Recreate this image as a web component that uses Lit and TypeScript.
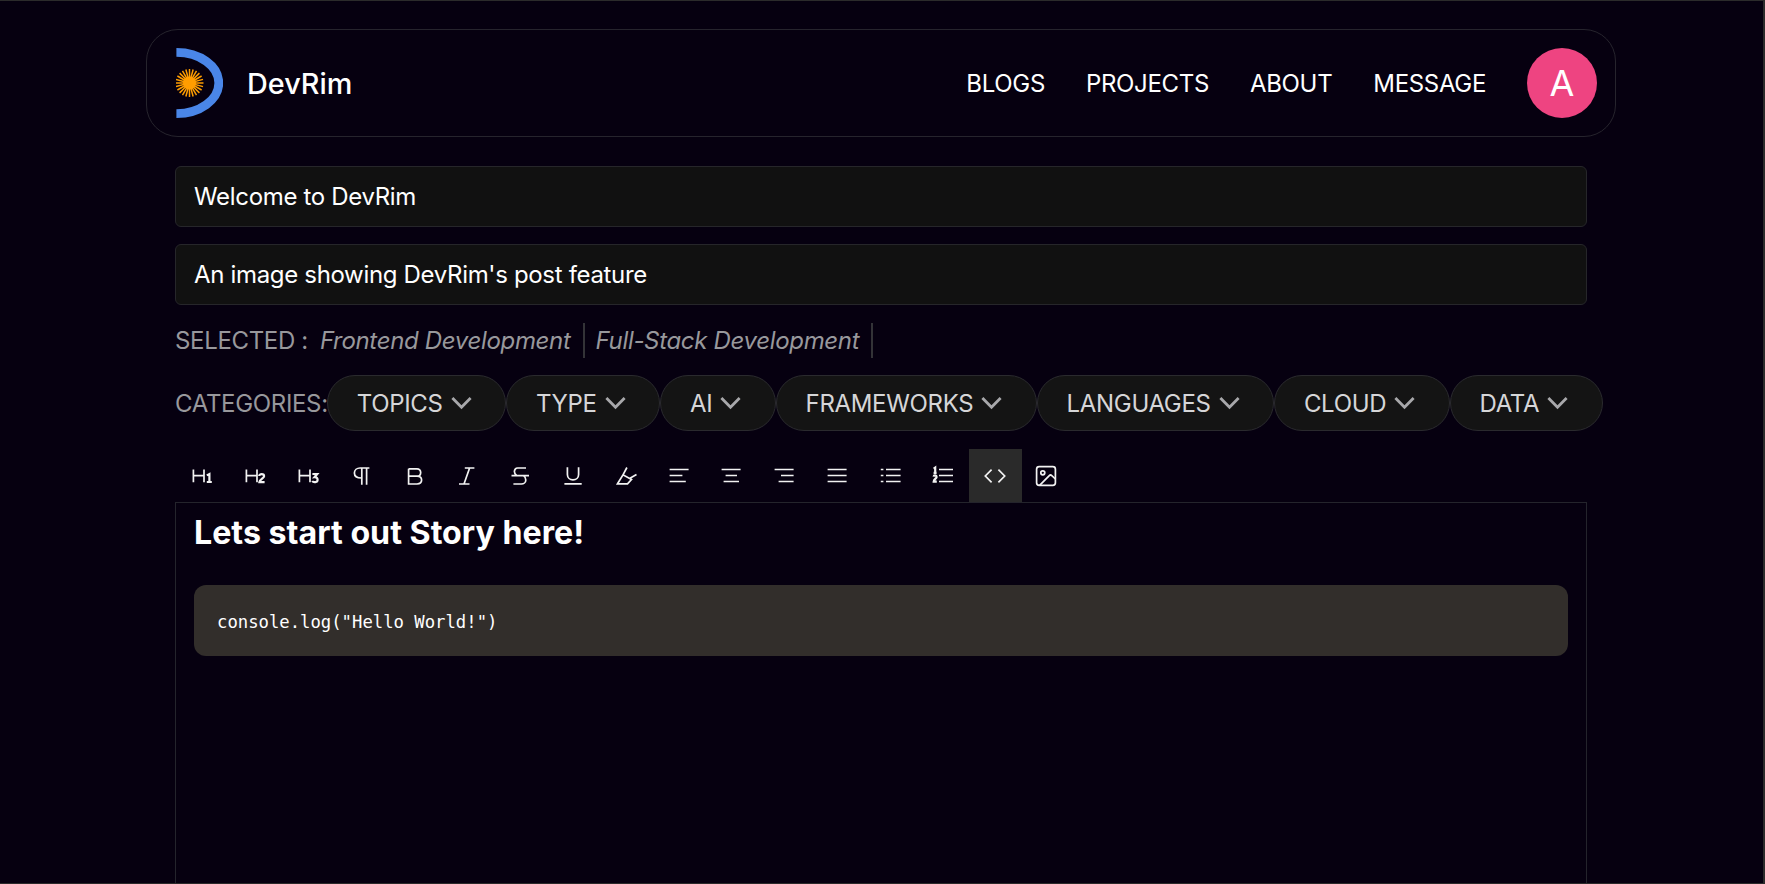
import { LitElement, css, html, svg } from 'lit'
import { customElement } from 'lit/decorators.js'

// toolbar icons, drawn as strokes on a 24 box
const STROKES: Record<string, string> = {
  h1: 'M2.4 5.5V18.2M13 5.5V18.2M2.4 11.6H13',
  h2: 'M2.4 5.5V18.2M13 5.5V18.2M2.4 11.6H13',
  h3: 'M2.4 5.5V18.2M13 5.5V18.2M2.4 11.6H13',
  para: 'M19.4 4H10C7 4 4.4 6 4.4 9C4.4 12 7 14 11.5 14M11.8 4V20.8M16.6 4V20.8',
  bold: 'M5.6 4.8V20H14C16.8 20 18.6 18.3 18.6 16.1C18.6 14 16.9 12.2 14 12.2H5.6M14 12.2C16.4 12.2 17.7 10.5 17.7 8.5C17.7 6.4 16.3 4.8 14 4.8H5.6',
  italic: 'M9.8 4H19.4M4 20H14.5M14.6 4L9 20',
  strike: 'M18 4H9.6C7.6 4 6.4 5.8 6.4 7.6C6.4 9.3 7.2 10.5 8.6 11.5M3.5 11.6H21M15.4 11.6C17.1 12.7 17.8 14.3 17.8 15.9C17.8 18.4 15.6 20 13.4 20H5.4',
  under: 'M6.4 3.2V10.4C6.4 14 9 15.8 12 15.8C15 15.8 17.6 14 17.6 10.4V3.2M3.4 19.9H20.7',
  mark: 'M3.5 19.8L9 10.8L17.5 15.5L13.5 19.8ZM9 10.8L12.9 3.5M15.5 14.4L22.5 10.5',
  left: 'M2.6 5.5H21.6M2.6 11.5H15.4M2.6 17.5H18.8',
  center: 'M2.6 5.5H21.6M6.6 11.5H18M4.6 17.5H20',
  right: 'M2.6 5.5H21.6M9 11.5H21.6M6.6 17.5H21.6',
  justify: 'M2.6 5.5H21.6M2.6 11.5H21.6M2.6 17.5H21.6',
  ul: 'M8 5.5H22.6M8 11.5H22.6M8 17.5H22.6M2.8 5.5H5.4M2.8 11.5H5.4M2.8 17.5H5.4',
  ol: 'M8 5.5H22M8 11.5H22M8 17.5H22',
  code: 'M8.6 5.7L2.3 12L8.6 18.3M15.4 5.7L21.7 12L15.4 18.3',
}

// the small numerals sit heavier than the rest of each icon
const DIGITS: Record<string, string> = {
  h1: 'M15.8 11.4L18.4 10V18.2M15.8 18H20.8',
  h2: 'M15.2 12C15.2 9.4 20.1 9.4 20.1 12.2C20.1 14.2 15.8 15.2 15.4 18.1H20.6',
  h3: 'M15.4 10H20.2L17.5 13.2C19.6 13 20.6 14.3 20.6 15.7C20.6 18.6 16.4 18.8 15.2 17',
  ol: 'M2.6 4.6L4.2 3.6V8.8M2.6 8.8H5.6M2.6 12.6C2.8 11 5.6 11 5.6 12.9C5.6 14.4 2.9 15 2.7 17.6H5.8',
}

const TOOLS = ['h1', 'h2', 'h3', 'para', 'bold', 'italic', 'strike', 'under', 'mark', 'left', 'center', 'right', 'justify', 'ul', 'ol', 'code']
const CATEGORIES = ['TOPICS', 'TYPE', 'AI', 'FRAMEWORKS', 'LANGUAGES', 'CLOUD', 'DATA']
const LINKS = ['BLOGS', 'PROJECTS', 'ABOUT', 'MESSAGE']
const SELECTED = ['Frontend Development', 'Full-Stack Development']

// 24 thin rays around the sun's centre
const RAYS = Array.from({ length: 24 }, (_, i) => {
  const a = (i * Math.PI) / 12
  return svg`<line x1="13.5" y1="35" x2=${13.5 + Math.cos(a) * 14} y2=${35 + Math.sin(a) * 14}></line>`
})

@customElement('app-root')
export class AppRoot extends LitElement {
  static styles = css`
    :host {
      display: block;
      height: 884px;
      overflow: hidden;
      background: #060010;
      color: #fff;
      font-family: Inter, 'Liberation Sans', sans-serif;
      box-sizing: border-box;
      padding-right: 1px;
      border-top: 1px solid #2b2b2b;
      border-right: 2px solid #2b2b2b;
      border-bottom: 1px solid #2b2b2b;
    }
    .page {
      width: 1470px;
      margin: 0 auto;
      padding-top: 28px;
    }
    nav {
      display: flex;
      align-items: center;
      justify-content: space-between;
      height: 108px;
      box-sizing: border-box;
      padding: 0 18px 0 29px;
      border: 1px solid #26242d;
      border-radius: 32px;
    }
    .brand {
      display: flex;
      align-items: center;
      gap: 24px;
      font-size: 28.8px;
      font-weight: 500;
    }
    .logo {
      display: block;
    }
    .links {
      display: flex;
      align-items: center;
      gap: 41px;
      font-size: 24px;
      letter-spacing: -0.33px;
    }
    .avatar {
      width: 70px;
      height: 70px;
      border-radius: 50%;
      background: #ee4481;
      display: flex;
      align-items: center;
      justify-content: center;
      font-size: 36px;
      letter-spacing: 0;
    }
    main {
      padding: 0 29px;
      font-size: 24px;
      letter-spacing: -0.33px;
    }
    .field {
      height: 61px;
      box-sizing: border-box;
      margin-top: 17px;
      padding: 0 18px;
      display: flex;
      align-items: center;
      background: #111111;
      border: 1px solid #26262a;
      border-radius: 6px;
    }
    .field:first-child {
      margin-top: 29px;
    }
    .selected {
      display: flex;
      align-items: center;
      height: 36px;
      margin-top: 17px;
      margin-bottom: 17px;
      color: #98989c;
    }
    .selected .label {
      margin-right: 12px;
    }
    .selected em {
      padding-right: 12px;
      margin-right: 11px;
      line-height: 35px;
      border-right: 2px solid #333337;
    }
    .categories {
      display: flex;
      align-items: center;
      color: #98989c;
    }
    .categories .label {
      margin-right: -1px;
    }
    .pill {
      display: flex;
      align-items: center;
      gap: 8px;
      height: 56px;
      box-sizing: border-box;
      padding: 0 33.3px 0 29px;
      color: #d6d6d8;
      background: #141414;
      border: 1px solid #2a2a2e;
      border-radius: 28px;
    }
    .chev {
      width: 21px;
      height: 14px;
      fill: none;
      stroke: #a8a8ab;
      stroke-width: 2.8;
    }
    .toolbar {
      display: flex;
      align-items: center;
      margin: 18px 0 0 2px;
      height: 53px;
    }
    .tool {
      display: flex;
      align-items: center;
      justify-content: center;
      width: 52.8px;
      height: 53px;
      color: #f2f2f2;
    }
    .tool.on {
      background: #2a2a2a;
    }
    .tool.img {
      width: 24px;
      margin-left: 12px;
    }
    .icon {
      width: 24px;
      height: 24px;
      display: block;
      fill: none;
      stroke: currentColor;
      stroke-width: 1.7;
    }
    .icon .digit {
      stroke-width: 2.2;
    }
    .editor {
      height: 500px;
      box-sizing: border-box;
      padding: 0 18px;
      border: 1px solid #24242c;
      letter-spacing: 0;
    }
    h1 {
      margin: 0;
      padding-top: 10px;
      font-size: 32.2px;
      line-height: 39px;
      font-weight: 700;
    }
    pre {
      margin: 33px 0 0;
      height: 71px;
      box-sizing: border-box;
      padding: 25px 23px;
      font-family: 'DejaVu Sans Mono', 'Liberation Mono', monospace;
      font-size: 17.25px;
      line-height: 24px;
      background: #322e2b;
      border-radius: 12px;
    }
  `

  render() {
    return html`
      <div class="page">
        <nav>
          <div class="brand">
            <svg class="logo" width="47" height="70" viewBox="0 0 47 70">
              <path d="M0.4 4.4A42.4 30.6 0 0 1 0.4 65.6" fill="none" stroke="#4a86e8" stroke-width="8.8"></path>
              <g stroke="#ff9d00" stroke-width="1.5">${RAYS}</g>
              <circle cx="13.5" cy="35" r="6.5" fill="#ff9d00"></circle>
            </svg>
            <span>DevRim</span>
          </div>
          <div class="links">
            ${LINKS.map((l) => html`<span>${l}</span>`)}
            <div class="avatar">A</div>
          </div>
        </nav>
        <main>
          <div class="field">Welcome to DevRim</div>
          <div class="field">An image showing DevRim's post feature</div>
          <div class="selected">
            <span class="label">SELECTED :</span>
            ${SELECTED.map((s) => html`<em>${s}</em>`)}
          </div>
          <div class="categories">
            <span class="label">CATEGORIES:</span>
            ${CATEGORIES.map(
              (c) => html`<div class="pill">
                ${c}
                <svg class="chev" viewBox="0 0 21 14"><path d="M1.4 2L10.5 11.2L19.6 2"></path></svg>
              </div>`
            )}
          </div>
          <div class="toolbar">
            ${TOOLS.map(
              (t) => html`<div class="tool ${t === 'code' ? 'on' : ''}">
                <svg class="icon" viewBox="0 0 24 24">
                  <path d=${STROKES[t]}></path>
                  ${DIGITS[t] ? svg`<path class="digit" d=${DIGITS[t]}></path>` : ''}
                </svg>
              </div>`
            )}
            <div class="tool img">
              <svg class="icon" viewBox="0 0 24 24">
                <rect x="2.6" y="2.6" width="18.8" height="18.8" rx="2.6"></rect>
                <circle cx="8.8" cy="8.8" r="2"></circle>
                <path d="M21.4 15L17.8 11.6C17 10.9 16 10.9 15.3 11.6L5.6 21.4"></path>
              </svg>
            </div>
          </div>
          <div class="editor">
            <h1>Lets start out Story here!</h1>
            <pre>console.log("Hello World!")</pre>
          </div>
        </main>
      </div>
    `
  }
}
